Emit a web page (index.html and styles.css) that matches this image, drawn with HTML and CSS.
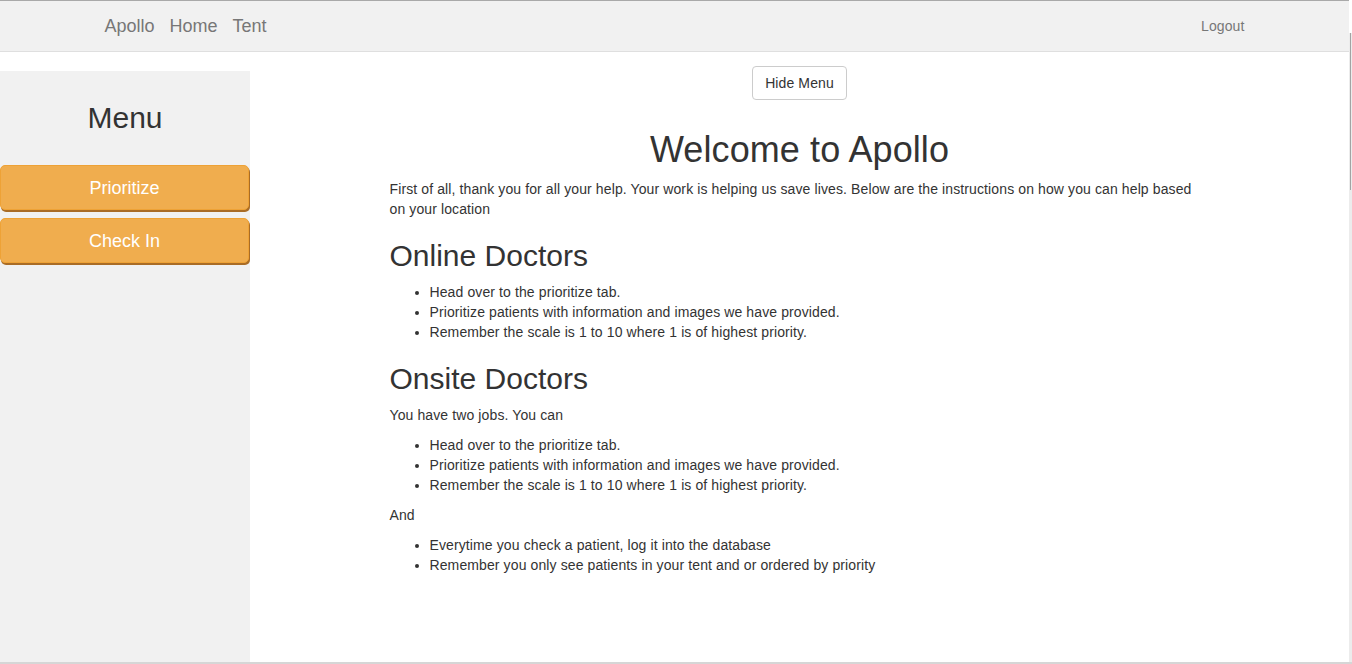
FILE: index.html
```html
<!DOCTYPE html>
<html>
<head>
<meta charset="utf-8">
<title>Apollo</title>
<link rel="stylesheet" href="styles.css">
</head>
<body>
<div class="page">
  <nav class="navbar">
    <div class="nav-container">
      <div class="nav-left">
        <a class="brand" href="#">Apollo</a>
        <a class="nav-link" href="#">Home</a>
        <a class="nav-link" href="#">Tent</a>
      </div>
      <a class="logout" href="#">Logout</a>
    </div>
  </nav>
  <div class="layout">
    <aside class="sidebar">
      <h2 class="menu-title">Menu</h2>
      <button class="side-btn">Prioritize</button>
      <button class="side-btn">Check In</button>
    </aside>
    <main class="main">
      <div class="toggle-row">
        <button class="btn-default">Hide Menu</button>
      </div>
      <div class="content">
        <h1>Welcome to Apollo</h1>
        <p>First of all, thank you for all your help. Your work is helping us save lives. Below are the instructions on how you can help based on your location</p>
        <h2>Online Doctors</h2>
        <ul>
          <li>Head over to the prioritize tab.</li>
          <li>Prioritize patients with information and images we have provided.</li>
          <li>Remember the scale is 1 to 10 where 1 is of highest priority.</li>
        </ul>
        <h2>Onsite Doctors</h2>
        <p>You have two jobs. You can</p>
        <ul>
          <li>Head over to the prioritize tab.</li>
          <li>Prioritize patients with information and images we have provided.</li>
          <li>Remember the scale is 1 to 10 where 1 is of highest priority.</li>
        </ul>
        <p>And</p>
        <ul>
          <li>Everytime you check a patient, log it into the database</li>
          <li>Remember you only see patients in your tent and or ordered by priority</li>
        </ul>
      </div>
    </main>
  </div>
  <div class="scrollbar"><div class="thumb"></div></div>
</div>
</body>
</html>
```

FILE: styles.css
```css
* { box-sizing: border-box; }
html, body { margin: 0; padding: 0; }
body {
  font-family: "Liberation Sans", Arial, sans-serif;
  font-size: 14px;
  line-height: 20px;
  letter-spacing: 0.11px;
  color: #333;
  background: #fff;
  overflow: hidden;
}
.page {
  position: relative;
  width: 1352px;
  height: 664px;
  display: flex;
  flex-direction: column;
  border-bottom: 2px solid #d6d6d6;
}
.navbar {
  height: 52px;
  flex: none;
  background: #f1f1f1;
  border-top: 1px solid #a9a9a9;
  border-bottom: 1px solid #dfdfdf;
  margin-right: 3px;
}
.nav-container {
  width: 1170px;
  margin: 0 auto;
  padding: 0 15px 0 15px;
  height: 50px;
  display: flex;
  align-items: center;
  justify-content: space-between;
}
.nav-left { display: flex; gap: 15px; align-items: center; }
.brand, .nav-link {
  font-size: 18px;
  letter-spacing: 0;
  color: #777;
  text-decoration: none;
}
.logout {
  font-size: 14px;
  color: #777;
  text-decoration: none;
}
.layout {
  flex: 1;
  display: flex;
  margin-right: 3px;
  min-height: 0;
}
.sidebar {
  width: 250px;
  flex: none;
  margin-top: 19px;
  background: #f1f1f1;
  padding-top: 10px;
}
.menu-title {
  margin: 20px 0 31px;
  font-size: 30px;
  font-weight: 500;
  line-height: 33px;
  letter-spacing: 0;
  text-align: center;
  color: #333;
}
.side-btn {
  display: block;
  width: 249px;
  height: 45px;
  margin: 0 0 8px;
  padding: 2px 0 0;
  background: #f0ad4e;
  border: 1px solid #eea236;
  border-radius: 5px;
  box-shadow: 1px 2px 0 #a96c26;
  color: #fff;
  font-family: "Liberation Sans", Arial, sans-serif;
  font-size: 18px;
  cursor: pointer;
}
.main {
  flex: 1;
  padding-top: 14px;
}
.toggle-row { display: flex; justify-content: center; }
.btn-default {
  height: 34px;
  padding: 6px 12px;
  font-family: "Liberation Sans", Arial, sans-serif;
  font-size: 14px;
  line-height: 20px;
  letter-spacing: 0.11px;
  color: #333;
  background: #fff;
  border: 1px solid #ccc;
  border-radius: 4px;
}
.content {
  width: 820px;
  margin: 0 auto;
}
.content h1 {
  margin: 30px 0 9px;
  font-size: 36px;
  font-weight: 500;
  line-height: 40px;
  letter-spacing: 0.1px;
  text-align: center;
}
.content h2 {
  margin: 20px 0 10px;
  font-size: 30px;
  font-weight: 500;
  line-height: 33px;
  letter-spacing: 0;
}
.content p { margin: 0 0 10px; }
.content ul { margin: 0 0 10px; padding-left: 40px; }
.scrollbar {
  position: absolute;
  right: 0;
  top: 33px;
  bottom: 0;
  width: 3px;
  background: #ececec;
}
.thumb {
  margin-left: 1px;
  width: 1px;
  height: 157px;
  background: #a3a3a3;
}
```
